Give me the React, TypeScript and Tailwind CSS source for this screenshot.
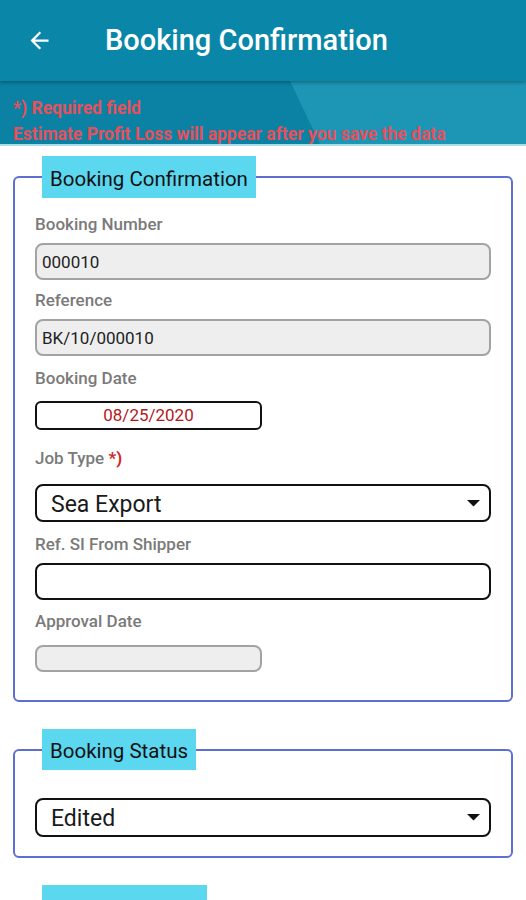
import React from 'react'

function Caret() {
  return (
    <svg width="13" height="7" viewBox="0 0 13 7" className="shrink-0 -mt-[4px]">
      <path d="M0 0h13L6.5 6.5z" fill="#111" />
    </svg>
  )
}

function Label({ children, className = '' }: { children: React.ReactNode; className?: string }) {
  return <div className={`text-[17px] leading-5 font-medium text-[#7a7a7a] ${className}`}>{children}</div>
}

export default function App() {
  return (
    <div className="w-[526px] min-h-[900px] bg-white font-['Roboto',sans-serif] overflow-hidden">
      {/* top bar */}
      <header className="h-[81px] bg-[#0a87a8] flex items-center px-[26px] shadow-[0_2px_3px_rgba(0,0,0,0.25)] relative z-10">
        <svg width="27" height="27" viewBox="0 0 24 24">
          <path d="M20 11H7.83l5.59-5.59L12 4l-8 8 8 8 1.41-1.41L7.83 13H20v-2z" fill="#fff" />
        </svg>
        <h1 className="ml-[52px] text-white text-[29px] font-medium">Booking Confirmation</h1>
      </header>

      {/* notice band */}
      <div className="relative h-[65px] bg-[#0b82a3] border-b-2 border-[#a9dbe8]">
        <div className="absolute inset-0 bg-[#1d95b4] [clip-path:polygon(290px_0,100%_0,100%_100%,320px_100%)]" />
        <div className="relative pl-[13px] pt-[14px] text-[17.5px] leading-[27px] font-bold text-[#e5505c]">
          <div>*) Required field</div>
          <div className="-mt-[1px]">Estimate Profit Loss will appear after you save the data</div>
        </div>
      </div>

      <div className="px-[13px] pt-[10px]">
        {/* card 1 */}
        <fieldset className="border-2 border-[#5d6fd3] rounded-md pb-[28px]">
          <legend className="ml-[27px] bg-[#5cd7f0] px-[8px] pt-[4px] h-[42px] flex items-center text-[20.5px] text-[#111]">
            Booking Confirmation
          </legend>
          <div className="px-[20px] pt-[16px]">
            <Label>Booking Number</Label>
            <div className="mt-[9px] h-[37px] bg-[#eeeeee] border-2 border-[#a3a3a3] rounded-lg flex items-center px-[5px] pt-[2px] text-[17px] text-[#222]">
              000010
            </div>
            <Label className="mt-[10px]">Reference</Label>
            <div className="mt-[9px] h-[37px] bg-[#eeeeee] border-2 border-[#a3a3a3] rounded-lg flex items-center px-[5px] pt-[2px] text-[17px] text-[#222]">
              BK/10/000010
            </div>
            <Label className="mt-[12px]">Booking Date</Label>
            <div className="mt-[13px] w-[227px] h-[29px] bg-white border-2 border-[#111] rounded-md flex items-center justify-center text-[17px] text-[#b3191c]">
              08/25/2020
            </div>
            <Label className="mt-[18px]">
              Job Type <span className="text-[#d12a2a] font-bold">*)</span>
            </Label>
            <div className="mt-[16px] h-[38px] bg-white border-2 border-[#111] rounded-lg flex items-center justify-between pl-[14px] pr-[9px] pt-[4px] text-[23px] text-[#1a1a1a]">
              <span>Sea Export</span>
              <Caret />
            </div>
            <Label className="mt-[12px]">Ref. SI From Shipper</Label>
            <div className="mt-[9px] h-[37px] bg-white border-2 border-[#111] rounded-lg" />
            <Label className="mt-[11px]">Approval Date</Label>
            <div className="mt-[14px] w-[227px] h-[27px] bg-[#eeeeee] border-2 border-[#a3a3a3] rounded-lg" />
          </div>
        </fieldset>

        {/* card 2 */}
        <fieldset className="mt-[27px] border-2 border-[#5d6fd3] rounded-md pb-[19px]">
          <legend className="ml-[27px] bg-[#5cd7f0] px-[8px] pt-[4px] h-[41px] flex items-center text-[20.5px] text-[#111]">
            Booking Status
          </legend>
          <div className="px-[20px] pt-[28px]">
            <div className="h-[39px] bg-white border-2 border-[#111] rounded-lg flex items-center justify-between pl-[14px] pr-[9px] pt-[4px] text-[23px] text-[#1a1a1a]">
              <span>Edited</span>
              <Caret />
            </div>
          </div>
        </fieldset>

        {/* card 3 (cut off) */}
        <fieldset className="mt-[27px] border-2 border-[#5d6fd3] rounded-md h-[80px]">
          <legend className="ml-[27px] w-[165px] bg-[#5cd7f0] h-[41px]" />
        </fieldset>
      </div>
    </div>
  )
}
